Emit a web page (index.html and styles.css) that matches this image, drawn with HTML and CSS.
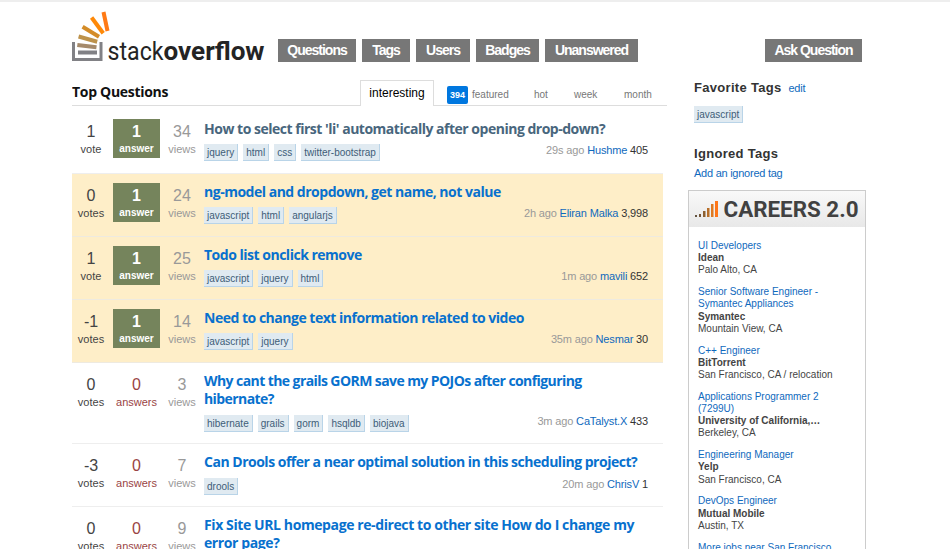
FILE: index.html
```html
<!DOCTYPE html>
<html lang="en">
<head>
<meta charset="utf-8">
<title>Stack Overflow</title>
<link rel="stylesheet" href="styles.css">
</head>
<body>
<div class="page">
  <header class="header">
    <svg class="logo" width="196" height="56" viewBox="0 0 196 56" role="img" aria-label="stackoverflow">
      <path d="M1.500 32v17.500h27.500V32" fill="none" stroke="#818185" stroke-width="3"/>
      <g stroke-width="4">
        <path d="M6 42.500h19" stroke="#818185"/>
        <path d="M5.300 35l19.200 2.300" stroke="#a58a6b"/>
        <path d="M6.600 26.500l18.600 5.200" stroke="#bd924b"/>
        <path d="M10.600 16.800L27 26.700" stroke="#d48c28"/>
        <path d="M19.600 7.500l11.600 15.800" stroke="#fe8908"/>
        <path d="M31.500 2l4 19" stroke="#ff7a15"/>
      </g>
      <text class="logo-light" x="35.500" y="50" textLength="56" lengthAdjust="spacingAndGlyphs">stack</text>
      <text class="logo-bold" x="91.500" y="50" textLength="101" lengthAdjust="spacingAndGlyphs">overflow</text>
    </svg>
    <nav class="nav">
      <a class="w-questions">Questions</a><a class="w-tags">Tags</a><a class="w-users">Users</a><a class="w-badges">Badges</a><a class="w-unanswered">Unanswered</a>
    </nav>
    <a class="ask">Ask Question</a>
  </header>
  <div class="content">
    <main class="main">
      <div class="subheader">
        <h1>Top Questions</h1>
        <div class="tabs">
          <a class="active">interesting</a>
          <a class="featured"><b>394</b>featured</a>
          <a class="hot">hot</a>
          <a class="week">week</a>
          <a class="month">month</a>
        </div>
      </div>
      <div class="questions">
        <article class="question visited">
          <div class="stat votes"><b>1</b>vote</div><div class="stat accepted"><b>1</b>answer</div><div class="stat views"><b>34</b>views</div>
          <div class="summary"><h3>How to select first 'li' automatically after opening drop-down?</h3>
            <div class="meta"><div class="tags"><a>jquery</a><a>html</a><a>css</a><a>twitter-bootstrap</a></div><div class="started">29s ago <a>Hushme</a> <b>405</b></div></div></div>
        </article>
        <article class="question tagged">
          <div class="stat votes"><b>0</b>votes</div><div class="stat accepted"><b>1</b>answer</div><div class="stat views"><b>24</b>views</div>
          <div class="summary"><h3>ng-model and dropdown, get name, not value</h3>
            <div class="meta"><div class="tags"><a>javascript</a><a>html</a><a>angularjs</a></div><div class="started">2h ago <a>Eliran Malka</a> <b>3,998</b></div></div></div>
        </article>
        <article class="question tagged">
          <div class="stat votes"><b>1</b>vote</div><div class="stat accepted"><b>1</b>answer</div><div class="stat views"><b>25</b>views</div>
          <div class="summary"><h3>Todo list onclick remove</h3>
            <div class="meta"><div class="tags"><a>javascript</a><a>jquery</a><a>html</a></div><div class="started">1m ago <a>mavili</a> <b>652</b></div></div></div>
        </article>
        <article class="question tagged">
          <div class="stat votes"><b>-1</b>votes</div><div class="stat accepted"><b>1</b>answer</div><div class="stat views"><b>14</b>views</div>
          <div class="summary"><h3>Need to change text information related to video</h3>
            <div class="meta"><div class="tags"><a>javascript</a><a>jquery</a></div><div class="started">35m ago <a>Nesmar</a> <b>30</b></div></div></div>
        </article>
        <article class="question two-line">
          <div class="stat votes"><b>0</b>votes</div><div class="stat unanswered"><b>0</b>answers</div><div class="stat views"><b>3</b>views</div>
          <div class="summary"><h3 class="tight">Why cant the grails GORM save my POJOs after configuring<br>hibernate?</h3>
            <div class="meta"><div class="tags"><a>hibernate</a><a>grails</a><a>gorm</a><a>hsqldb</a><a>biojava</a></div><div class="started">3m ago <a>CaTalyst.X</a> <b>433</b></div></div></div>
        </article>
        <article class="question">
          <div class="stat votes"><b>-3</b>votes</div><div class="stat unanswered"><b>0</b>answers</div><div class="stat views"><b>7</b>views</div>
          <div class="summary"><h3>Can Drools offer a near optimal solution in this scheduling project?</h3>
            <div class="meta"><div class="tags"><a>drools</a></div><div class="started">20m ago <a>ChrisV</a> <b>1</b></div></div></div>
        </article>
        <article class="question two-line">
          <div class="stat votes"><b>0</b>votes</div><div class="stat unanswered"><b>0</b>answers</div><div class="stat views"><b>9</b>views</div>
          <div class="summary"><h3 class="loose">Fix Site URL homepage re-direct to other site How do I change my<br>error page?</h3></div>
        </article>
      </div>
    </main>
    <aside class="sidebar">
      <h4>Favorite Tags <a>edit</a></h4>
      <div class="tags"><a>javascript</a></div>
      <h4 class="ignored">Ignored Tags</h4>
      <a class="add">Add an ignored tag</a>
      <section class="careers">
        <svg class="careers-logo" width="176" height="36" viewBox="0 0 176 36" role="img" aria-label="CAREERS 2.0">
          <path d="M6 24h2v2H6z" fill="#62523f"/><path d="M10 23h2v3h-2z" fill="#74573b"/>
          <path d="M14 20h2.500v6H14z" fill="#8d6031"/><path d="M18 17h2.500v9H18z" fill="#b76e29"/>
          <path d="M22 13h2.500v13H22z" fill="#dd7922"/><path d="M26 10h3v16h-3z" fill="#ff7618"/>
          <text x="34.500" y="26" textLength="135" lengthAdjust="spacingAndGlyphs">CAREERS 2.0</text>
        </svg>
        <ul class="jobs">
          <li><a>UI Developers</a><b>Idean</b>Palo Alto, CA</li>
          <li><a>Senior Software Engineer -<br>Symantec Appliances</a><b>Symantec</b>Mountain View, CA</li>
          <li><a>C++ Engineer</a><b>BitTorrent</b>San Francisco, CA / relocation</li>
          <li><a>Applications Programmer 2<br>(7299U)</a><b>University of California,…</b>Berkeley, CA</li>
          <li><a>Engineering Manager</a><b>Yelp</b>San Francisco, CA</li>
          <li><a>DevOps Engineer</a><b>Mutual Mobile</b>Austin, TX</li>
          <li><a>More jobs near San Francisco...</a></li>
        </ul>
      </section>
    </aside>
  </div>
</div>
</body>
</html>
```
FILE: styles.css
```css
* { box-sizing: border-box; }
body {
  margin: 0;
  height: 549px;
  overflow: hidden;
  background: #fff;
  border-top: 2px solid #eee;
  font: 11px/14px "Liberation Sans", Arial, sans-serif;
  color: #444;
}
a { color: #0f69bd; }
h1, h3, h4 { margin: 0; }
.page { width: 794px; height: 547px; margin-left: 72px; overflow: hidden; }
.header { display: flex; height: 78px; padding-top: 8px; align-items: flex-start; }
.logo { flex: none; margin-right: 10px; }
.logo text { font-family: Roboto, sans-serif; font-size: 25px; fill: #242424; }
.logo .logo-light { font-weight: 400; }
.logo .logo-bold { font-weight: 700; }
.nav { display: flex; gap: 6px; margin-top: 29px; }
.nav a, .ask {
  height: 23px;
  background: #777;
  color: #fff;
  font-size: 14px;
  font-weight: bold;
  line-height: 23px;
  text-align: center;
  letter-spacing: -1px;
}
.w-questions { width: 78px; }
.w-tags { width: 48px; }
.w-users { width: 54px; }
.w-badges { width: 63px; }
.w-unanswered { width: 93px; }
.ask { width: 97px; margin: 29px 4px 0 auto; }
.content { display: flex; gap: 21px; }
.main { width: 595px; flex: none; }
.subheader { display: flex; height: 26px; border-bottom: 1px solid #ddd; }
h1, h3 { font-family: "Open Sans", sans-serif; font-weight: 700; }
h1 { width: 288px; font-size: 14px; line-height: 23px; color: #111; letter-spacing: -0.300px; }
.tabs { display: flex; height: 27px; font-size: 10px; line-height: 29px; }
.tabs a { color: #777; }
.tabs .active { width: 74px; height: 26px; border: 1px solid #ddd; border-bottom: 0; background: #fff; color: #000; font-size: 12px; line-height: 24px; text-align: center; }
.featured { display: flex; width: 75px; margin-left: 13px; }
.featured b { width: 21px; height: 18px; margin: 6px 4px 0 0; border-radius: 2px; background: #0077df; color: #fff; font-size: 9px; line-height: 18px; text-align: center; }
.hot { margin-left: 12px; width: 40px; }
.week { width: 50px; }
.questions { width: 591px; padding-top: 4px; }
.question { display: flex; height: 63px; padding-top: 9px; border-bottom: 1px solid #eee; }
.visited { height: 64px; }
.tagged { background: #feeec8; border-bottom-color: #eeeae0; }
.two-line { height: 81px; }
.stat { flex: none; height: 39px; text-align: center; line-height: 14px; }
.stat b { display: block; padding-top: 2px; font-size: 16px; font-weight: normal; line-height: 21px; }
.votes { width: 38px; }
.accepted, .unanswered { width: 47px; margin-left: 3px; }
.accepted { background: #75845c; color: #fff; font-weight: bold; font-size: 10px; }
.accepted b { font-weight: bold; }
.unanswered { color: #9a4444; }
.views { width: 40px; margin-left: 2px; color: #999; }
.summary { flex: 1; margin-left: 2px; }
.summary h3 { font-size: 14px; line-height: 18px; color: #0871ce; white-space: nowrap; letter-spacing: -0.490px; }
.summary h3.tight { letter-spacing: -0.580px; }
.summary h3.loose { letter-spacing: -0.400px; }
.visited .summary h3 { color: #48667d; padding-top: 1px; margin-bottom: -1px; }
.meta { display: flex; justify-content: space-between; margin-top: 7px; padding-right: 15px; }
.tagged .meta { margin-top: 6px; }
.tags { display: flex; gap: 5px; }
.tags a { height: 17px; padding: 0 3px; background: #e0eaf1; border-right: 1px solid #b9d4e8; border-bottom: 1px solid #b9d4e8; color: #3e5d78; font-size: 10px; line-height: 17px; }
.started { color: #999; line-height: 12px; letter-spacing: -0.150px; }
.started b { color: #333; font-weight: normal; }
.sidebar { width: 178px; }
h4 { font-size: 13px; line-height: 15px; color: #333; letter-spacing: 0.300px; }
h4 a { margin-left: 3px; font-size: 11px; font-weight: normal; letter-spacing: -0.200px; }
.sidebar .tags { margin-top: 10px; }
.sidebar h4.ignored { margin-top: 23px; }
.add { display: block; margin-top: 5px; line-height: 15px; letter-spacing: -0.250px; }
.sidebar .tags, .sidebar h4, .add { padding-left: 6px; }
.careers { height: 380px; margin-top: 9px; border: 1px solid #ccc; }
.careers-logo { display: block; background: linear-gradient(#f9f9f9, #e8e8e8); }
.careers-logo text { font: 700 22px Roboto, sans-serif; fill: #414141; }
.jobs { list-style: none; margin: 0; padding: 13px 0 0 9px; font-size: 10px; line-height: 12.200px; }
.jobs li { margin-bottom: 9.600px; white-space: nowrap; }
.jobs a, .jobs b { display: block; }
```
